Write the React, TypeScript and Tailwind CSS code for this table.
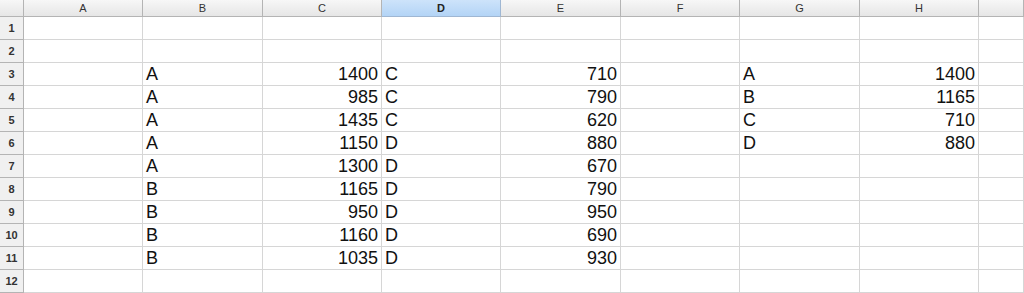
import React from 'react';

const columns = ['A', 'B', 'C', 'D', 'E', 'F', 'G', 'H', 'I'];
const widths = [119, 120, 119, 119, 120, 119, 120, 119, 60];

type Cell = { text: string; align?: 'left' | 'right' };

const data: Record<number, Record<string, Cell>> = {};

const put = (row: number, col: string, text: string, align: 'left' | 'right') => {
  data[row] = data[row] || {};
  data[row][col] = { text, align };
};

const pairsLeft: [string, number][] = [
  ['A', 1400], ['A', 985], ['A', 1435], ['A', 1150], ['A', 1300],
  ['B', 1165], ['B', 950], ['B', 1160], ['B', 1035],
];
const pairsMid: [string, number][] = [
  ['C', 710], ['C', 790], ['C', 620], ['D', 880], ['D', 670],
  ['D', 790], ['D', 950], ['D', 690], ['D', 930],
];
const totals: [string, number][] = [['A', 1400], ['B', 1165], ['C', 710], ['D', 880]];

pairsLeft.forEach(([k, v], i) => {
  put(i + 3, 'B', k, 'left');
  put(i + 3, 'C', String(v), 'right');
});
pairsMid.forEach(([k, v], i) => {
  put(i + 3, 'D', k, 'left');
  put(i + 3, 'E', String(v), 'right');
});
totals.forEach(([k, v], i) => {
  put(i + 3, 'G', k, 'left');
  put(i + 3, 'H', String(v), 'right');
});

const rows = Array.from({ length: 12 }, (_, i) => i + 1);

export default function App() {
  const template = `24px ${widths.slice(0, -1).map((w) => `${w}px`).join(' ')} 1fr`;

  return (
    <div className="w-[1024px] h-[293px] overflow-hidden bg-white font-['Liberation_Sans',Arial,sans-serif]">
      <div className="grid" style={{ gridTemplateColumns: template }}>
        <div className="h-[17px] border-r border-b border-[#b4b4b4] bg-gradient-to-b from-[#f7f7f7] to-[#e6e6e6]" />
        {columns.map((c) => (
          <div
            key={c}
            className={
              c === 'D'
                ? 'h-[17px] flex items-center justify-center border-r border-b border-[#9fb7d3] bg-gradient-to-b from-[#cde3fa] to-[#b3d4f6] text-[11px] font-bold text-[#222]'
                : 'h-[17px] flex items-center justify-center border-r border-b border-[#b4b4b4] bg-gradient-to-b from-[#f7f7f7] to-[#e6e6e6] text-[11px] text-[#333]'
            }
          >
            {c === 'I' ? '' : c}
          </div>
        ))}

        {rows.map((r) => (
          <React.Fragment key={r}>
            <div className="h-[23px] flex items-center justify-center border-r border-b border-[#b4b4b4] bg-[#f0f0f0] text-[11px] font-bold text-[#333]">
              {r}
            </div>
            {columns.map((c) => {
              const cell = data[r]?.[c];
              return (
                <div
                  key={c}
                  className={`h-[23px] flex items-end pb-[1px] px-[3px] border-r border-b border-[#d6d6d6] text-[18px] leading-[20px] text-[#111] ${
                    cell?.align === 'right' ? 'justify-end' : 'justify-start'
                  }`}
                >
                  {cell?.text}
                </div>
              );
            })}
          </React.Fragment>
        ))}
      </div>
    </div>
  );
}
